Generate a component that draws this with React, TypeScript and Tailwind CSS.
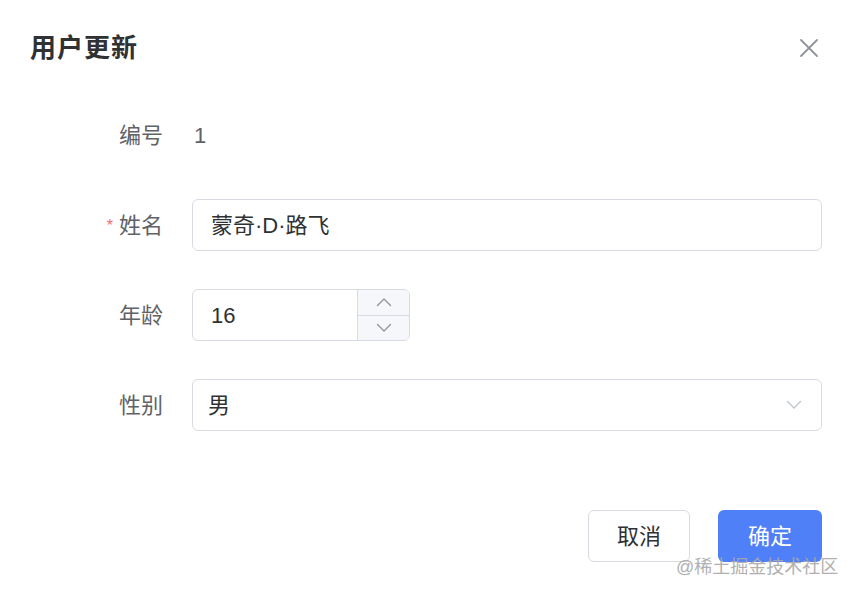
import React from "react";

function Chevron({ dir, className }: { dir: "up" | "down"; className?: string }) {
  return (
    <svg viewBox="0 0 16 10" className={className} fill="none" stroke="currentColor" strokeWidth="1.3" strokeLinecap="round" strokeLinejoin="round">
      {dir === "up" ? <path d="M1.5 8.5 L8 2 L14.5 8.5" /> : <path d="M1.5 1.5 L8 8 L14.5 1.5" />}
    </svg>
  );
}

function Label({ children, required }: { children: React.ReactNode; required?: boolean }) {
  return (
    <div className="w-[162px] shrink-0 pr-[29px] flex items-center justify-end text-[22px] text-[#606266]">
      {required && <span className="text-[#f56c6c] text-[16px] mr-[6px] mt-[2px]">*</span>}
      <span>{children}</span>
    </div>
  );
}

export default function App() {
  return (
    <div
      className="relative w-[856px] h-[594px] bg-white overflow-hidden"
      style={{ fontFamily: '"Liberation Sans", "Noto Sans CJK SC", sans-serif' }}
    >
      {/* Header */}
      <div className="flex items-center justify-between pl-[30px] pr-[37px] pt-[33px] h-[63px]">
        <div className="text-[26px] font-bold text-[#303133] leading-[30px] tracking-[1px]">用户更新</div>
        <svg viewBox="0 0 20 20" className="w-[20px] h-[20px] text-[#909399]" fill="none" stroke="currentColor" strokeWidth="1.8" strokeLinecap="round">
          <path d="M2 2 L18 18 M18 2 L2 18" />
        </svg>
      </div>

      {/* Form */}
      <div className="pl-[30px] pr-[34px] pt-[46px] flex flex-col gap-[38px]">
        <div className="flex h-[52px]">
          <Label>编号</Label>
          <div className="flex items-center text-[22px] text-[#606266] pl-[2px]">1</div>
        </div>

        <div className="flex h-[52px]">
          <Label required>姓名</Label>
          <div className="flex-1 flex items-center border border-[#d8dbe2] rounded-[6px] pl-[18px] text-[22px] text-[#303133]">
            蒙奇·D·路飞
          </div>
        </div>

        <div className="flex h-[52px]">
          <Label>年龄</Label>
          <div className="w-[218px] flex border border-[#d8dbe2] rounded-[6px] overflow-hidden">
            <div className="flex-1 flex items-center pl-[18px] text-[22px] text-[#303133]">16</div>
            <div className="w-[52px] flex flex-col border-l border-[#d8dbe2] bg-[#f5f7fa]">
              <div className="flex-1 flex items-center justify-center border-b border-[#d8dbe2] text-[#909399]">
                <Chevron dir="up" className="w-[16px] h-[10px]" />
              </div>
              <div className="flex-1 flex items-center justify-center text-[#909399]">
                <Chevron dir="down" className="w-[16px] h-[10px]" />
              </div>
            </div>
          </div>
        </div>

        <div className="flex h-[52px]">
          <Label>性别</Label>
          <div className="flex-1 flex items-center justify-between border border-[#d8dbe2] rounded-[6px] pl-[15px] pr-[19px] text-[22px] text-[#303133]">
            <span>男</span>
            <Chevron dir="down" className="w-[16px] h-[10px] text-[#c0c4cc]" />
          </div>
        </div>
      </div>

      {/* Footer */}
      <div className="flex justify-end gap-[28px] pr-[34px] pt-[79px]">
        <button className="w-[102px] h-[52px] border border-[#d8dbe2] rounded-[6px] bg-white text-[22px] text-[#303133]">
          取消
        </button>
        <button className="w-[104px] h-[52px] rounded-[6px] bg-[#4f80f7] text-[22px] text-white">
          确定
        </button>
      </div>

      {/* Watermark */}
      <div className="absolute left-[676px] top-[555px] text-[18px] leading-[24px] text-[#a8a8a8] opacity-90">
        @稀土掘金技术社区
      </div>
    </div>
  );
}
